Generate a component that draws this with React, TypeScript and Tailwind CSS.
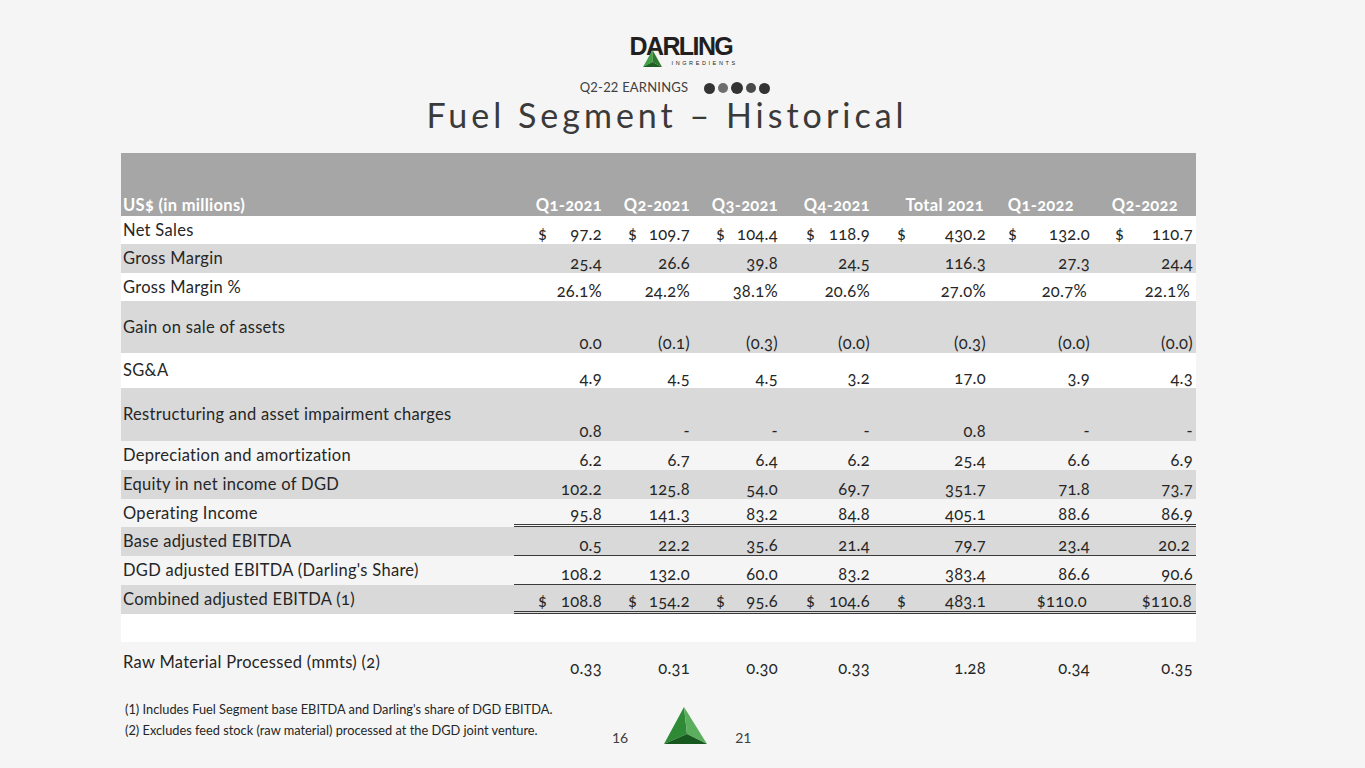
import React from 'react';

type Row = {
  label: string;
  values: string[];
  dollars?: boolean;
  bg: string;
  h: string;
  border?: string;
  pads?: string[];
};

const rowsData: Row[] = [
  { label: 'Net Sales', values: ['97.2', '109.7', '104.4', '118.9', '430.2', '132.0', '110.7'], dollars: true, bg: 'bg-white', h: 'h-[28px]' },
  { label: 'Gross Margin', values: ['25.4', '26.6', '39.8', '24.5', '116.3', '27.3', '24.4'], bg: 'bg-[#d9d9d9]', h: 'h-[29px]' },
  { label: 'Gross Margin %', values: ['26.1%', '24.2%', '38.1%', '20.6%', '27.0%', '20.7%', '22.1%'], bg: 'bg-white', h: 'h-[28px]', pads: ['pr-0', 'pr-0', 'pr-0', 'pr-0', 'pr-0', 'pr-[3px]', 'pr-[6px]'] },
  { label: 'Gain on sale of assets', values: ['0.0', '(0.1)', '(0.3)', '(0.0)', '(0.3)', '(0.0)', '(0.0)'], bg: 'bg-[#d9d9d9]', h: 'h-[52px]' },
  { label: 'SG&A', values: ['4.9', '4.5', '4.5', '3.2', '17.0', '3.9', '4.3'], bg: 'bg-white', h: 'h-[35px]' },
  { label: 'Restructuring and asset impairment charges', values: ['0.8', '-', '-', '-', '0.8', '-', '-'], bg: 'bg-[#d9d9d9]', h: 'h-[53px]' },
  { label: 'Depreciation and amortization', values: ['6.2', '6.7', '6.4', '6.2', '25.4', '6.6', '6.9'], bg: 'bg-[#f5f5f5]', h: 'h-[29px]' },
  { label: 'Equity in net income of DGD', values: ['102.2', '125.8', '54.0', '69.7', '351.7', '71.8', '73.7'], bg: 'bg-[#d9d9d9]', h: 'h-[29px]' },
  { label: 'Operating Income', values: ['95.8', '141.3', '83.2', '84.8', '405.1', '88.6', '86.9'], bg: 'bg-[#f5f5f5]', h: 'h-[28px]', border: 'border-b-[3px] border-double border-[#3a3a3a]' },
  { label: 'Base adjusted EBITDA', values: ['0.5', '22.2', '35.6', '21.4', '79.7', '23.4', '20.2'], bg: 'bg-[#d9d9d9]', h: 'h-[29px]', border: 'border-b border-[#3a3a3a]', pads: ['pr-0', 'pr-0', 'pr-0', 'pr-0', 'pr-0', 'pr-0', 'pr-[6px]'] },
  { label: "DGD adjusted EBITDA (Darling's Share)", values: ['108.2', '132.0', '60.0', '83.2', '383.4', '86.6', '90.6'], bg: 'bg-[#f5f5f5]', h: 'h-[29px]', border: 'border-b border-[#3a3a3a]' },
];

const widths = ['w-[88px]', 'w-[88px]', 'w-[88px]', 'w-[92px]', 'w-[116px]', 'w-[104px]', 'w-[106px]'];
const dollarPads = ['pl-[24px]', 'pl-[26px]', 'pl-[26px]', 'pl-[28px]', 'pl-[27px]', 'pl-[22px]', 'pl-[25px]'];
const headers = ['Q1-2021', 'Q2-2021', 'Q3-2021', 'Q4-2021', 'Total 2021', 'Q1-2022', 'Q2-2022'];
const headerPads = ['pr-0', 'pr-0', 'pr-0', 'pr-0', 'pr-[2px]', 'pr-[16px]', 'pr-[18px]'];
const defaultPads = ['pr-0', 'pr-0', 'pr-0', 'pr-0', 'pr-0', 'pr-0', 'pr-[3px]'];

const Logo: React.FC = () => (
  <div className="relative w-[104px] h-[30px]">
    <span className="absolute left-0 top-[-4px] font-['Liberation_Sans'] font-bold text-[25px] leading-none tracking-[-1.6px] text-[#231f20]">
      DARLING
    </span>
    <svg className="absolute left-[13px] top-[12px]" width="19" height="17" viewBox="0 0 19 17">
      <polygon points="9.5,0 0,17 9.5,12" fill="#43a047" />
      <polygon points="9.5,0 19,17 9.5,12" fill="#2b7a2e" />
      <polygon points="0,17 19,17 9.5,12" fill="#1d5e22" />
    </svg>
    <span className="absolute left-[42px] top-[23px] font-['Liberation_Sans'] text-[5.5px] leading-none tracking-[2.6px] text-[#231f20]">
      INGREDIENTS
    </span>
  </div>
);

const Pyramid: React.FC = () => (
  <svg width="43" height="38" viewBox="0 0 43 38">
    <polygon points="20,0 0,37 23,27" fill="#2f8a36" />
    <polygon points="20,0 43,37 23,27" fill="#5cae5f" />
    <polygon points="0,37 43,37 23,27" fill="#17581e" />
  </svg>
);

const App: React.FC = () => {
  return (
    <div className="w-[1365px] h-[768px] bg-[#f5f5f5] overflow-hidden font-['Lato',sans-serif] text-[#262626]">
      <div className="flex justify-center pt-[38px] pr-[2px]">
        <Logo />
      </div>

      <div className="flex justify-center items-center pr-[15px] mt-[12px] h-[16px]">
        <span className="text-[13px] text-[#404040] tracking-[0.2px]">Q2-22 EARNINGS</span>
        <div className="flex items-center gap-[3px] ml-[16px]">
          <span className="w-[11px] h-[11px] rounded-full bg-[#333333]" />
          <span className="w-[10px] h-[10px] rounded-full bg-[#6e6e6e]" />
          <span className="w-[12px] h-[12px] rounded-full bg-[#333333]" />
          <span className="w-[10px] h-[10px] rounded-full bg-[#4a4a4a]" />
          <span className="w-[11px] h-[11px] rounded-full bg-[#333333]" />
        </div>
      </div>

      <h1 className="text-center pr-[31px] text-[34px] leading-[38px] tracking-[4px] text-[#3a3a3a] font-normal">
        Fuel Segment – Historical
      </h1>

      <div className="ml-[121px] w-[1075px] mt-[19px] oldstyle-nums text-[16.5px] tracking-[0.3px]">
        <div className="flex h-[63px] bg-[#a6a6a6] text-white font-bold items-end leading-[18px] pb-[2px]">
          <div className="w-[393px] pl-[2px]">US$ (in millions)</div>
          {headers.map((h, i) => (
            <div key={h} className={`${widths[i]} ${headerPads[i]} text-right`}>
              {h}
            </div>
          ))}
        </div>

        {rowsData.map((r) => (
          <div key={r.label} className={`flex ${r.bg} ${r.h}`}>
            <div className="w-[393px] pl-[2px] self-center">{r.label}</div>
            {r.values.map((v, i) => (
              <div
                key={i}
                className={`${widths[i]} ${(r.pads ?? defaultPads)[i]} ${r.border ?? ''} flex justify-between items-end leading-[20px]`}
              >
                <span className={dollarPads[i]}>{r.dollars ? '$' : ''}</span>
                <span>{v}</span>
              </div>
            ))}
          </div>
        ))}

        <div className="flex bg-[#d9d9d9] h-[29px]">
          <div className="w-[393px] pl-[2px] self-center">Combined adjusted EBITDA (1)</div>
          {['108.8', '154.2', '95.6', '104.6', '483.1'].map((v, i) => (
            <div
              key={i}
              className={`${widths[i]} border-b-[3px] border-double border-[#3a3a3a] flex justify-between items-end leading-[20px]`}
            >
              <span className={dollarPads[i]}>$</span>
              <span>{v}</span>
            </div>
          ))}
          <div className="w-[104px] pr-[3px] border-b-[3px] border-double border-[#3a3a3a] flex justify-end items-end leading-[20px]">
            $110.0
          </div>
          <div className="w-[106px] pr-[4px] border-b-[3px] border-double border-[#3a3a3a] flex justify-end items-end leading-[20px]">
            $110.8
          </div>
        </div>

        <div className="h-[28px] bg-white" />

        <div className="flex h-[40px]">
          <div className="w-[393px] pl-[2px] pt-[8px]">Raw Material Processed (mmts) (2)</div>
          {['0.33', '0.31', '0.30', '0.33', '1.28', '0.34', '0.35'].map((v, i) => (
            <div key={i} className={`${widths[i]} ${defaultPads[i]} text-right pt-[14px]`}>
              {v}
            </div>
          ))}
        </div>
      </div>

      <div className="flex ml-[125px] mt-[17px]">
        <div className="w-[487px] text-[12.8px] leading-[21px] text-[#262626]">
          <p>(1) Includes Fuel Segment base EBITDA and Darling's share of DGD EBITDA.</p>
          <p>(2) Excludes feed stock (raw material) processed at the DGD joint venture.</p>
        </div>
        <div className="flex items-end gap-[36px] mt-[8px]">
          <span className="text-[14px] text-[#404040] leading-[18px] mb-[-2px]">16</span>
          <Pyramid />
          <span className="text-[14px] text-[#404040] leading-[18px] mb-[-2px] ml-[-8px]">21</span>
        </div>
      </div>
    </div>
  );
};

export default App;
